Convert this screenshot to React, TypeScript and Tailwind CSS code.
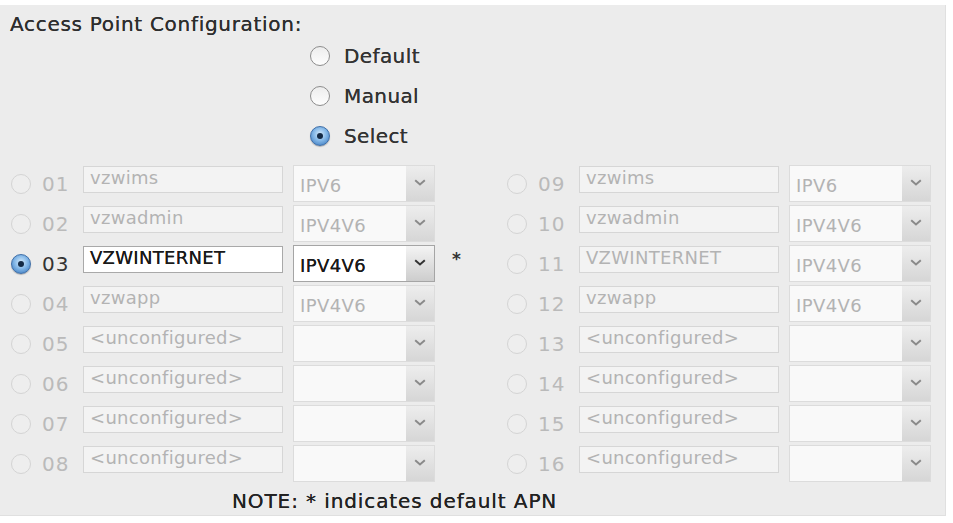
import React from 'react';

type Apn = { id: string; name: string; ip: string };

const LEFT: Apn[] = [
  { id: '01', name: 'vzwims', ip: 'IPV6' },
  { id: '02', name: 'vzwadmin', ip: 'IPV4V6' },
  { id: '03', name: 'VZWINTERNET', ip: 'IPV4V6' },
  { id: '04', name: 'vzwapp', ip: 'IPV4V6' },
  { id: '05', name: '<unconfigured>', ip: '' },
  { id: '06', name: '<unconfigured>', ip: '' },
  { id: '07', name: '<unconfigured>', ip: '' },
  { id: '08', name: '<unconfigured>', ip: '' },
];

const RIGHT: Apn[] = [
  { id: '09', name: 'vzwims', ip: 'IPV6' },
  { id: '10', name: 'vzwadmin', ip: 'IPV4V6' },
  { id: '11', name: 'VZWINTERNET', ip: 'IPV4V6' },
  { id: '12', name: 'vzwapp', ip: 'IPV4V6' },
  { id: '13', name: '<unconfigured>', ip: '' },
  { id: '14', name: '<unconfigured>', ip: '' },
  { id: '15', name: '<unconfigured>', ip: '' },
  { id: '16', name: '<unconfigured>', ip: '' },
];

function Radio({ state }: { state: 'on' | 'off' | 'disabled' }) {
  if (state === 'on') {
    return (
      <span className="block shrink-0 w-[20px] h-[20px] rounded-full border border-[#3f6fa8] bg-[radial-gradient(circle_at_50%_40%,#d6ebfc_0%,#86b9e8_45%,#2f6fb8_100%)] flex items-center justify-center shadow-[0_1px_1px_rgba(0,0,0,0.25)]">
        <span className="block w-[6px] h-[6px] rounded-full bg-[#142a45]" />
      </span>
    );
  }
  if (state === 'off') {
    return <span className="block shrink-0 w-[20px] h-[20px] rounded-full border-[1.5px] border-[#8c8c8c] bg-[linear-gradient(#ededed,#fdfdfd)]" />;
  }
  return <span className="block shrink-0 w-[20px] h-[20px] rounded-full border-[1.5px] border-[#d4d4d4] bg-[#eeeeee]" />;
}

function Chevron({ dark }: { dark: boolean }) {
  return (
    <svg width="12" height="7" viewBox="0 0 12 7">
      <path d="M1.2 1.2 L6 5.4 L10.8 1.2" fill="none" stroke={dark ? '#333333' : '#8a8a8a'} strokeWidth="2" />
    </svg>
  );
}

function Row({ apn, active }: { apn: Apn; active: boolean }) {
  return (
    <div className="flex items-start h-[40px]">
      <div className="shrink-0 w-[31px] pl-[11px] pt-[9px]">
        <Radio state={active ? 'on' : 'disabled'} />
      </div>
      <div className={`shrink-0 w-[52px] pl-[11px] pt-[7px] text-[20px] tracking-[1px] leading-[24px] ${active ? 'text-[#333]' : 'text-[#bababa]'}`}>
        {apn.id}
      </div>
      <div
        className={`shrink-0 w-[200px] h-[27px] mt-[1px] border px-[6px] text-[18px] tracking-[0.3px] leading-[22px] ${
          active
            ? 'bg-white border-[#a9a9a9] text-[#1a1a1a] [text-shadow:0_0_0.6px_#1a1a1a]'
            : 'bg-[#f3f3f3] border-[#d6d6d6] text-[#b3b3b3]'
        }`}
      >
        {apn.name}
      </div>
      <div
        className={`shrink-0 ml-[10px] w-[142px] h-[37px] flex border ${
          active ? 'border-[#a5a5a5] bg-white' : 'border-[#dcdcdc] bg-[#f9f9f9]'
        }`}
      >
        <div
          className={`flex-1 pl-[6px] pt-[9px] text-[18px] tracking-[0.4px] leading-[22px] ${
            active ? 'text-[#1a1a1a] [text-shadow:0_0_0.6px_#1a1a1a]' : 'text-[#b3b3b3]'
          }`}
        >
          {apn.ip}
        </div>
        <div
          className={`w-[28px] flex items-center justify-center pb-[2px] ${
            active ? 'bg-[linear-gradient(#f4f4f4,#cdcdcd)]' : 'bg-[linear-gradient(#ededed,#d6d6d6)]'
          }`}
        >
          <Chevron dark={active} />
        </div>
      </div>
      <div className="pl-[17px] pt-[2px] text-[17px] font-bold text-[#333]">{apn.id === '03' ? '*' : ''}</div>
    </div>
  );
}

export default function App() {
  return (
    <div className="w-[953px] h-[523px] bg-white pt-[5px] font-['DejaVu_Sans',sans-serif]">
      <div className="w-[946px] h-[511px] bg-[#ececec] border-r border-b border-[#e0e0e0]">
        {/* Header */}
        <div className="pl-[10px] pt-[7px] text-[20px] tracking-[0.7px] text-[#2e2e2e] leading-[24px] [text-shadow:0_0_0.4px_#2e2e2e]">
          Access Point Configuration:
        </div>

        {/* Mode */}
        <div className="pl-[310px] flex flex-col">
          {[
            { label: 'Default', state: 'off' as const },
            { label: 'Manual', state: 'off' as const },
            { label: 'Select', state: 'on' as const },
          ].map((m) => (
            <div key={m.label} className="flex items-center h-[40px] gap-[14px]">
              <Radio state={m.state} />
              <span className="text-[20px] tracking-[0.4px] text-[#333] [text-shadow:0_0_0.4px_#333]">{m.label}</span>
            </div>
          ))}
        </div>

        {/* APN table */}
        <div className="flex pt-[9px]">
          <div className="w-[497px]">
            {LEFT.map((a) => (
              <Row key={a.id} apn={a} active={a.id === '03'} />
            ))}
          </div>
          <div className="w-[449px]">
            {RIGHT.map((a) => (
              <Row key={a.id} apn={a} active={false} />
            ))}
          </div>
        </div>

        <div className="pl-[232px] pt-[1px] text-[20px] tracking-[0.9px] text-[#222] [text-shadow:0_0_0.5px_#222]">
          NOTE: * indicates default APN
        </div>
      </div>
    </div>
  );
}
